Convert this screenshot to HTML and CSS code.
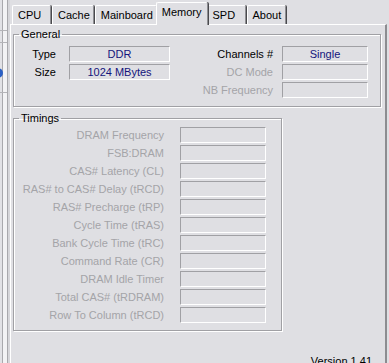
FILE: index.html
```
<!DOCTYPE html>
<html lang="en">

<head>
  <meta charset="UTF-8">
  <meta name="viewport" content="width=device-width, initial-scale=1.0">
  <title>Memory</title>
  <link rel="stylesheet" href="styles.css">
</head>

<body>
  <div class="window">
    <div class="side">
      <div class="side-rule first"></div>
      <div class="side-rule"></div>
      <div class="side-dot"></div>
      <div class="side-rule last"></div>
    </div>

    <div class="main">
      <div class="tabs">
        <div class="tab">CPU</div>
        <div class="tab">Cache</div>
        <div class="tab">Mainboard</div>
        <div class="tab active">Memory</div>
        <div class="tab">SPD</div>
        <div class="tab">About</div>
      </div>

      <div class="panel">
        <fieldset class="group general">
          <legend>General</legend>
          <div class="general-grid">
            <span class="label">Type</span>
            <span class="box value">DDR</span>
            <span class="label label-right">Channels #</span>
            <span class="box value">Single</span>

            <span class="label">Size</span>
            <span class="box value">1024 MBytes</span>
            <span class="label label-right off">DC Mode</span>
            <span class="box"></span>

            <span></span>
            <span></span>
            <span class="label label-right off">NB Frequency</span>
            <span class="box"></span>
          </div>
        </fieldset>

        <fieldset class="group timings">
          <legend>Timings</legend>
          <div class="timings-grid">
            <span class="label off">DRAM Frequency</span><span class="box"></span>
            <span class="label off">FSB:DRAM</span><span class="box"></span>
            <span class="label off">CAS# Latency (CL)</span><span class="box"></span>
            <span class="label off">RAS# to CAS# Delay (tRCD)</span><span class="box"></span>
            <span class="label off">RAS# Precharge (tRP)</span><span class="box"></span>
            <span class="label off">Cycle Time (tRAS)</span><span class="box"></span>
            <span class="label off">Bank Cycle Time (tRC)</span><span class="box"></span>
            <span class="label off">Command Rate (CR)</span><span class="box"></span>
            <span class="label off">DRAM Idle Timer</span><span class="box"></span>
            <span class="label off">Total CAS# (tRDRAM)</span><span class="box"></span>
            <span class="label off">Row To Column (tRCD)</span><span class="box"></span>
          </div>
        </fieldset>

        <div class="version">Version 1.41</div>
      </div>
    </div>
  </div>
</body>

</html>
```

FILE: styles.css
```
html,
body {
  margin: 0;
  height: 100%;
  overflow: hidden;
}

body {
  font-family: "Liberation Sans", Arial, sans-serif;
  font-size: 11px;
  color: #000;
  background: #dfdfe3;
}

.window {
  display: flex;
  height: 100%;
}

/* strip of the window behind */
.side {
  width: 10px;
  flex: none;
  background: linear-gradient(to right,
      #e2e2e6 0 2px, #a9a9ad 2px 3px, #f3f3f5 3px 7px,
      #a9a9ad 7px 8px, #d6d6da 8px 10px);
  overflow: hidden;
}

.side-rule {
  width: 7px;
  height: 1px;
  margin-top: 11px;
  background: #b4b4b8;
}

.side-rule.first {
  margin-top: 30px;
}

.side-rule.last {
  margin-top: 14px;
}

.side-dot {
  width: 10px;
  height: 10px;
  margin: 25px 0 0 -7px;
  border-radius: 50%;
  background: #2a5fc4;
}

.main {
  flex: 1;
  display: flex;
  flex-direction: column;
  min-height: 0;
}

.tabs {
  flex: none;
  display: flex;
  align-items: flex-end;
  height: 24px;
  padding-left: 2px;
}

.tab {
  box-sizing: border-box;
  min-width: 39px;
  height: 19px;
  padding: 2px 3px 0 5px;
  line-height: 14px;
  border-top: 1px solid #fff;
  border-left: 1px solid #fff;
  border-right: 1px solid #8e8e92;
  box-shadow: 1px 0 0 #4a4a4e;
  margin-right: 1px;
  border-radius: 2px 2px 0 0;
}

.tab.active {
  position: relative;
  z-index: 1;
  height: 23px;
  margin: 0 -1px -1px -2px;
  padding: 2px 5px 0 5px;
  background: #dfdfe3;
}

.panel {
  flex: 1 0 auto;
  margin-right: 2px;
  padding: 0 4px 0 2px;
  border-top: 1px solid #fff;
  border-left: 1px solid #fff;
  border-right: 2px solid #8c8c90;
}

.group {
  margin: 0;
  padding: 0;
  border: 1px solid #a0a0a4;
  box-shadow: 1px 1px 0 #fff, inset 1px 1px 0 #fff;
}

.group legend {
  margin-left: 5px;
  padding: 0 2px;
  line-height: 13px;
}

.general {
  margin-top: 3px;
  padding: 5px 0 8px;
}

.timings {
  width: 269px;
  box-sizing: border-box;
  margin-top: 5px;
  padding: 2px 0 7px;
}

.general-grid {
  display: grid;
  grid-template-columns: 55px 101px 112px 86px;
  grid-auto-rows: 16px;
  row-gap: 2px;
}

.timings-grid {
  display: grid;
  grid-template-columns: 166px 86px;
  grid-auto-rows: 16px;
  row-gap: 2px;
}

.label {
  text-align: right;
  line-height: 16px;
  padding-right: 13px;
  white-space: nowrap;
}

.label-right {
  padding-right: 9px;
}

.timings-grid .label {
  padding-right: 16px;
}

.off {
  color: #a4a4a8;
}

.box {
  box-sizing: border-box;
  height: 16px;
  border-top: 1px solid #a0a0a4;
  border-left: 1px solid #a0a0a4;
  border-bottom: 1px solid #fff;
  border-right: 1px solid #fff;
  text-align: center;
  line-height: 14px;
}

.value {
  color: #14147c;
}

.version {
  margin-top: 24px;
  padding-right: 9px;
  line-height: 13px;
  text-align: right;
}
```
